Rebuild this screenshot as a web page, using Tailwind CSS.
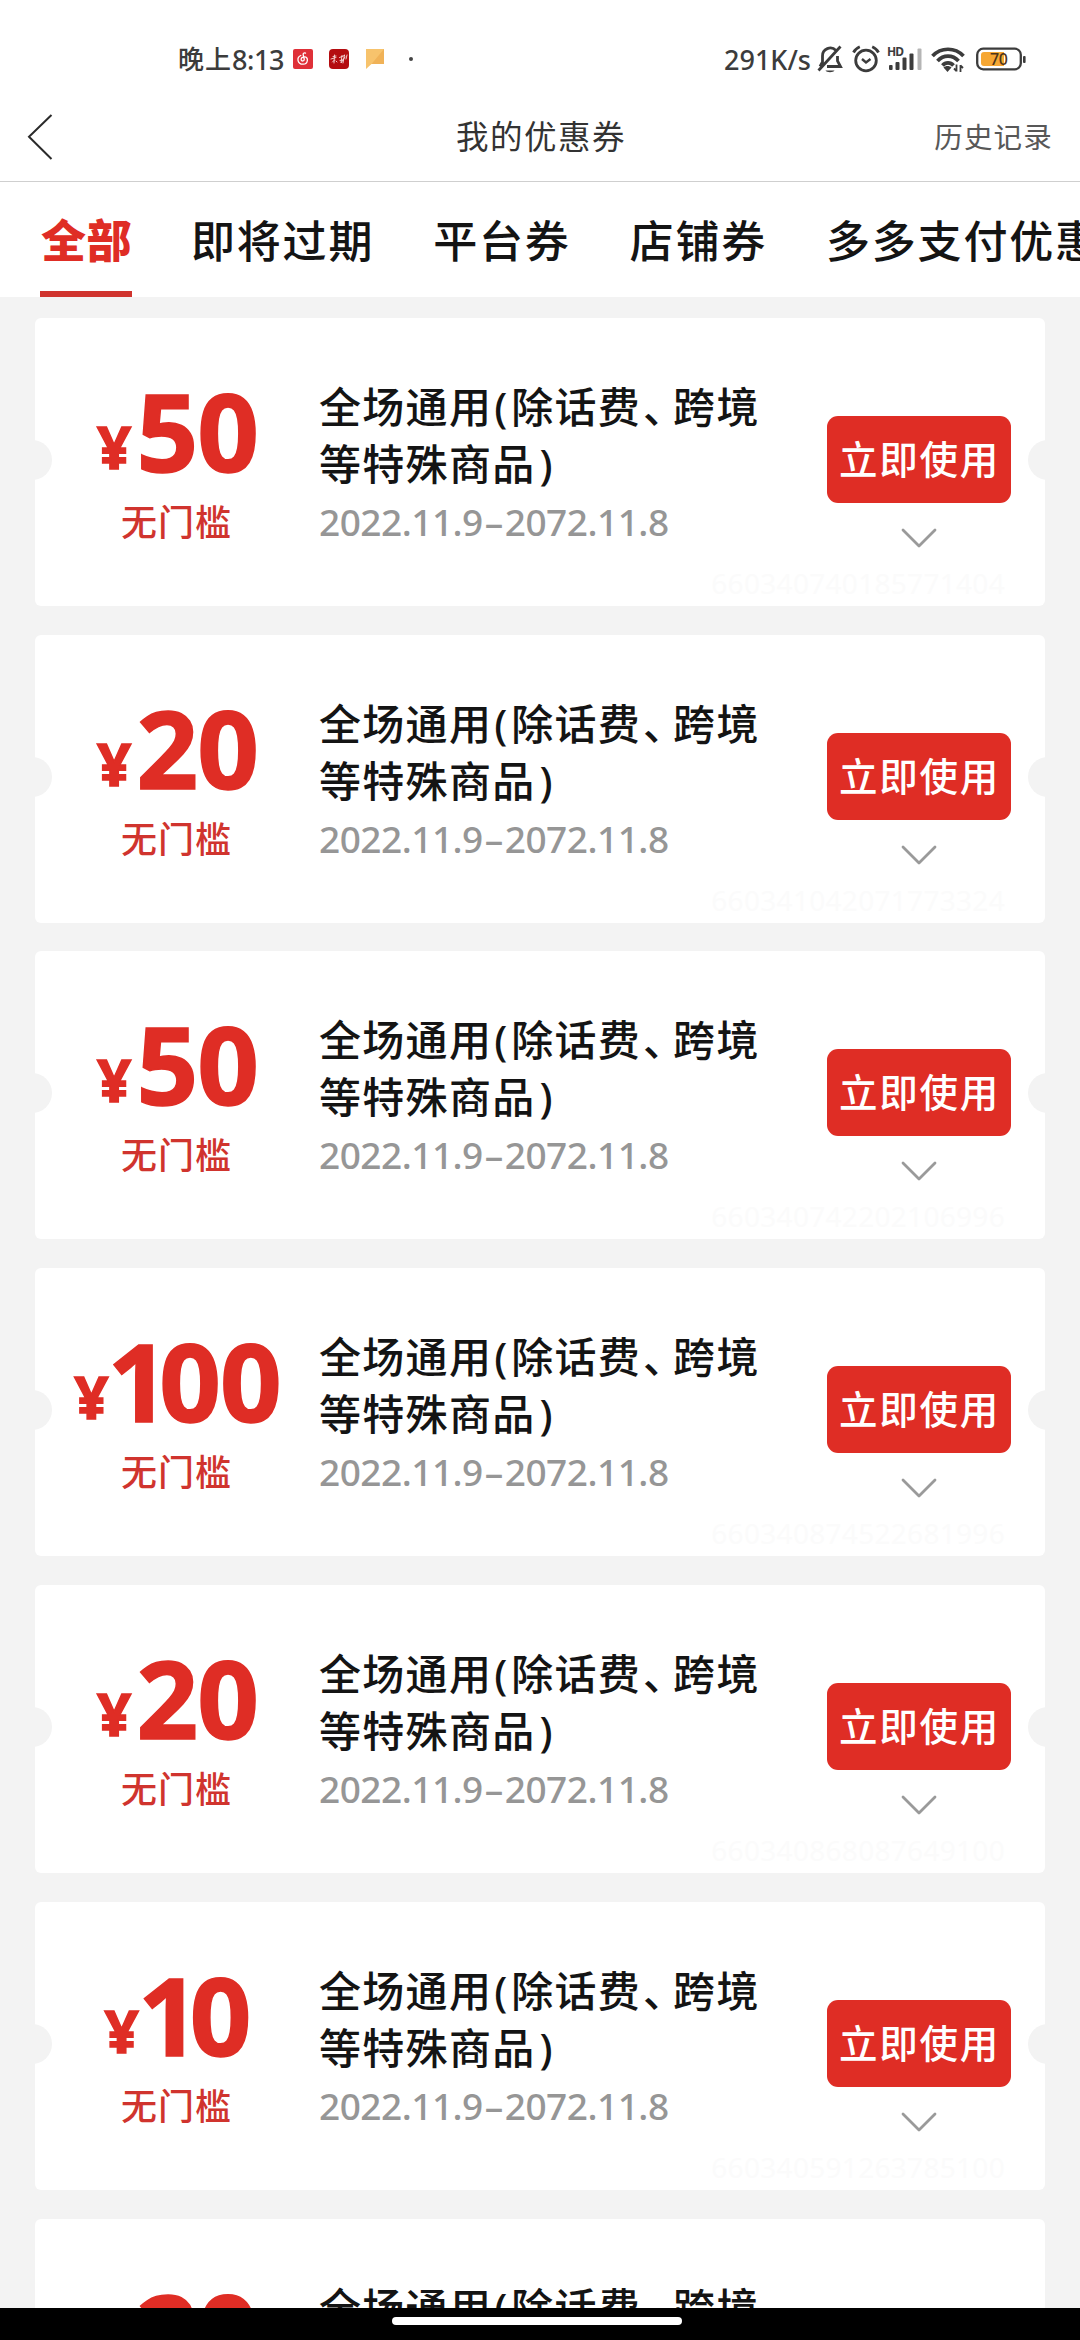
<!DOCTYPE html>
<html lang="zh-CN">
<head>
<meta charset="utf-8">
<title>我的优惠券</title>
<script src="https://cdn.jsdelivr.net/npm/@tailwindcss/browser@4"></script>
</head>
<body class="bg-[#f3f3f3]">
<div class="relative flex h-[2340px] w-[1080px] flex-col overflow-hidden bg-[#f3f3f3] font-['Noto_Sans','Noto_Sans_CJK_SC',sans-serif]">

  <!-- status bar -->
  <div class="flex h-[92px] shrink-0 items-center bg-white pt-[26px] pl-[178px] pr-[48px] text-[#3c3c3c]">
    <div class="flex h-[66px] w-[115px] items-center whitespace-nowrap font-medium leading-none"><span class="text-[26px] tracking-[1px]">晚上</span><span class="text-[27px] tracking-[-0.4px]">8:13</span></div>
    <svg class="h-5 w-5 shrink-0" viewBox="0 0 20 20" fill="none"><rect width="20" height="20" rx="2" fill="#df3038"/><path d="M12.500 4.200c-1.600-.7-2.700.2-2.300 1.600l1 4.200c.5 2.400-3 2.700-3.100.5-.1-1.900 1.900-3 3.800-2.600 3.600.7 3.400 7.200-1.700 7.300-6.100.1-6.800-6.900-2.400-8.700" stroke="#fff" stroke-width="1.300" stroke-linecap="round"/></svg>
    <svg class="ml-4 h-5 w-5 shrink-0" viewBox="0 0 20 20" fill="none"><rect width="20" height="20" rx="4" fill="#b40c10"/><path d="M2 10l5-1.500M5.500 6L5 14M3.500 13l2-2M7 12l1 1M4 7.500l3-.5M10.500 8.500l5-2M11 11.500l3.500-.8M13 6.500l-1 7.500 4-6M15.500 6l-1.500 8M18 6l-1 4" stroke="#f6dede" stroke-width=".9" stroke-linecap="round"/></svg>
    <svg class="ml-4 h-[22px] w-5 shrink-0" viewBox="0 0 20 22"><path d="M1 1h18v15H6.500L1 21z" fill="#f7c36c"/><path d="M19 1v15H6.500z" fill="#f0b257"/></svg>
    <div class="ml-6 h-1 w-1 rounded-full bg-[#444]"></div>
    <div class="ml-auto flex h-[66px] w-[308px] items-center">
      <span class="w-[88px] whitespace-nowrap text-[27px] font-medium leading-none">291K/s</span>
      <svg class="ml-[4px] h-[30px] w-[28px] shrink-0" viewBox="0 0 28 30" fill="none" stroke="#3c3c3c" stroke-width="2.800"><path d="M20 6.500A7.800 7.800 0 0 0 6.500 12v6L4 22.500M11 22.500h13.500L21.500 17v-5M2.500 26.500L24.500 2.500"/><path d="M9.500 26.500c1 2.300 8 2.300 9 0z" fill="#3c3c3c" stroke="none"/></svg>
      <svg class="ml-[8px] h-[28px] w-[28px] shrink-0" viewBox="0 0 28 28" fill="none" stroke="#3c3c3c" stroke-width="2.800"><circle cx="14" cy="15.500" r="10.300"/><path d="M1.500 7.500C3 4.500 5 3 7.800 1.800M26.500 7.500C25 4.500 23 3 20.200 1.800"/><path d="M10 14l4 3.500 4.500-3.500" stroke-width="2.400"/></svg>
      <svg class="ml-[7px] h-[28px] w-[36px] shrink-0 overflow-visible" viewBox="0 0 36 28" fill="#3c3c3c"><text x="0" y="11" font-size="12" font-weight="700" textLength="17" font-family="Noto Sans">HD</text><rect x="2" y="20" width="3.600" height="5" rx="1"/><rect x="8.500" y="17" width="4" height="8" rx="1"/><rect x="15.500" y="12.500" width="4" height="12.500" rx="1"/><rect x="22.500" y="8.500" width="4" height="16.500" rx="1"/><rect x="30.500" y="3.500" width="4" height="21.500" rx="1" fill="#b5b5b5"/></svg>
      <svg class="ml-[8px] h-[28px] w-[34px] shrink-0" viewBox="0 0 34 28" fill="none" stroke="#3c3c3c" stroke-width="3.700"><path d="M1.500 11C10 2 24 2 32.500 11M6.500 16c6-6.500 15-6.500 21 0M11.500 20.500c3-3.500 8-3.500 11 0"/><path d="M12.500 22.500c2-2 6-2 8 0l-4 4.500z" fill="#3c3c3c" stroke="none"/><path d="M25.500 19.500v7M25.500 26l-2.500-2.500M29.500 27v-7M29.500 20.500L32 23" stroke-width="1.800"/></svg>
      <svg class="ml-[11px] h-[24px] w-[52px] shrink-0" viewBox="0 0 52 24"><rect x="1.200" y="1.700" width="43.600" height="20.600" rx="6" fill="#fff" stroke="#3c3c3c" stroke-width="2.300"/><path d="M8 5h20v14H8a3 3 0 0 1-3-3V8a3 3 0 0 1 3-3z" fill="#f6a733"/><rect x="47" y="9" width="2.600" height="7" rx="1" fill="#3c3c3c"/><text x="14" y="17.800" font-size="16" font-weight="500" textLength="18" font-family="Noto Sans" fill="#4d341b">70</text></svg>
    </div>
  </div>

  <!-- title bar -->
  <div class="grid h-[90px] shrink-0 grid-cols-3 items-center border-b border-[#cfcfcf] bg-white">
    <svg class="ml-[27px] h-[46px] w-[26px]" viewBox="0 0 26 46" fill="none" stroke="#2b2b2b" stroke-width="2"><path d="M24.500 1L2 22.800 24.500 45"/></svg>
    <div class="pt-[2px] pl-[2px] text-center text-[32.500px] leading-none tracking-[1.500px] text-[#333]">我的优惠券</div>
    <div class="pt-[1px] pr-[27px] text-right text-[28.500px] leading-none tracking-[1.200px] text-[#585858]">历史记录</div>
  </div>

  <!-- tabs -->
  <div class="flex h-[115px] shrink-0 gap-[59px] overflow-hidden whitespace-nowrap bg-white pl-10 text-[44px] font-medium leading-[118px] tracking-[1.800px] text-[#141414]">
    <div class="h-full w-[92px] shrink-0 border-b-6 border-[#d0342e] pl-[1px] text-[45px] tracking-[0.500px] font-black text-[#df2d25]">全部</div>
    <div class="shrink-0">即将过期</div>
    <div class="shrink-0">平台券</div>
    <div class="shrink-0">店铺券</div>
    <div class="shrink-0">多多支付优惠</div>
  </div>

  <div id="list" class="flex flex-col gap-[28.900px] pt-[20.700px] px-[35px]"></div>

  <!-- gesture bar -->
  <div class="absolute inset-x-0 bottom-0 flex h-8 justify-center bg-black pt-[9px] pr-[6px]">
    <div class="h-2 w-[290px] rounded-full bg-white"></div>
  </div>
</div>

<script>
const coupons = [
  ["50", "660340740185771404"],
  ["20", "660341042071773324"],
  ["50", "660340742202106996"],
  ["100", "660340874522681996"],
  ["20", "660340868087649100"],
  ["10", "660340591263785100"],
  ["20", ""]
];
// The figure 1 is set tighter than the other digits.
const digits = amount => amount.replace("1", '<span class="-ml-[6px] -mr-[9px]">1</span>');
document.getElementById("list").innerHTML = coupons.map(([amount, serial]) => `
  <div class="relative flex h-[288px] shrink-0 overflow-hidden rounded-[6px] bg-white">
    <div class="absolute top-[122px] -left-[23px] h-10 w-10 rounded-full bg-[#f3f3f3]"></div>
    <div class="absolute top-[122px] -right-[23px] h-10 w-10 rounded-full bg-[#f3f3f3]"></div>
    <div class="flex w-[283px] flex-col items-center pt-[58px] text-[#df2d25]">
      <div class="flex items-baseline justify-center whitespace-nowrap pl-[2px] font-bold leading-[110px]"><span class="mr-[5px] -translate-y-[3px] text-[60px] [-webkit-text-stroke:1.500px_#df2d25]">¥</span><span class="text-[108px] tracking-[-1px] [-webkit-text-stroke:1.500px_#df2d25]">${digits(amount)}</span></div>
      <div class="-mt-[1px] text-[36px] font-medium leading-[40px] tracking-[1px] text-[#d0342e]">无门槛</div>
    </div>
    <div class="w-[480px] pt-[60px] pl-[1px]">
      <div class="whitespace-nowrap text-[42px] font-medium leading-[57px] tracking-[1.300px] text-[#141414]">全场通用<span class="inline-block w-[19px] pl-[2px]">(</span>除话费<span class="inline-block w-[32px] pl-[2px]">、</span>跨境<br>等特殊商品<span class="pl-[4px]">)</span></div>
      <div class="mt-[7px] whitespace-nowrap text-[37px] font-medium leading-[46px] text-[#969696] tracking-[-0.500px]">2022.11.9<span class="px-[2px]">–</span>2072.11.8</div>
    </div>
    <div class="flex w-[247px] flex-col items-center pt-[98px] pl-[29px] pr-[34px]">
      <div class="h-[87px] w-[184px] rounded-[11px] bg-[#df2d25] pl-[1px] text-center text-[38.500px] font-medium leading-[87px] tracking-[1.700px] text-white">立即使用</div>
      <svg class="mt-[25px] h-5 w-[38px] shrink-0" viewBox="0 0 38 20" fill="none" stroke="#9a9a9a" stroke-width="2.800" stroke-linecap="round" stroke-linejoin="round"><path d="M3 2l16 16L35 2"/></svg>
    </div>
    <div class="absolute right-[40px] bottom-[7px] text-[28px] leading-8 text-[#fbfbfb] tracking-[0.300px]">${serial}</div>
  </div>`).join("");
</script>
</body>
</html>
